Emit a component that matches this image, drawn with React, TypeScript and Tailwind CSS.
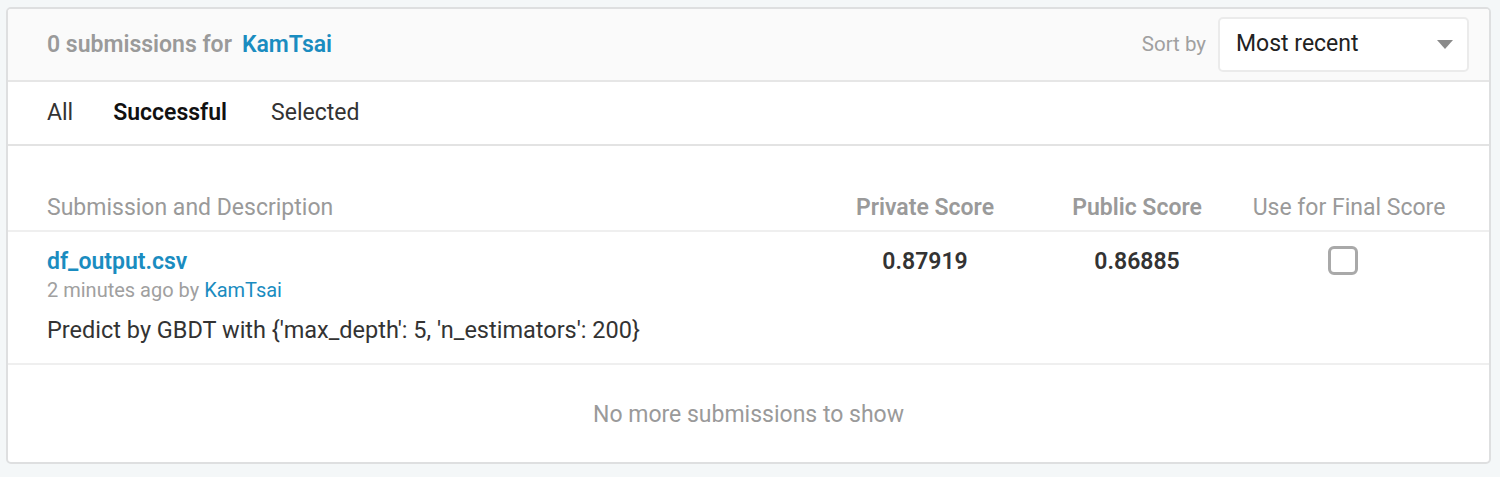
import React from "react";

export default function App() {
  const font = { fontFamily: "Roboto, 'Liberation Sans', sans-serif" };
  return (
    <div className="w-[1500px] h-[477px] bg-[#f4f7f8] pt-[7px] pl-[6px]" style={font}>
      <div className="w-[1485px] h-[457px] border-2 border-[#dedfe0] rounded-[5px] bg-white overflow-hidden flex flex-col">
        {/* Header */}
        <div className="h-[73px] bg-[#fafafa] border-b-2 border-[#e6e6e6] flex items-center justify-between pl-[39px] pr-[20px]">
          <div className="flex items-center text-[23px] font-semibold leading-[30px]">
            <span className="text-[#9a9a9a]">0 submissions for</span>
            <span className="text-[#1a8cc0] ml-[10px]">KamTsai</span>
          </div>
          <div className="flex items-center">
            <span className="text-[20.5px] text-[#a0a0a0] mr-[12px]">Sort by</span>
            <div className="w-[251px] h-[55px] bg-white border-2 border-[#ebebeb] rounded-[5px] flex items-center justify-between pl-[16px] pr-[14px]">
              <span className="text-[23px] text-[#222]">Most recent</span>
              <svg width="16" height="9" viewBox="0 0 16 9">
                <polygon points="0,0 16,0 8,9" fill="#8a8a8a" />
              </svg>
            </div>
          </div>
        </div>
        {/* Tabs */}
        <div className="h-[64px] border-b-2 border-[#e3e3e3] flex items-center pl-[39px] text-[23px] leading-[30px]">
          <span className="text-[#333]">All</span>
          <span className="text-[#111] font-semibold ml-[40px]">Successful</span>
          <span className="text-[#333] ml-[44px]">Selected</span>
        </div>
        {/* Table header */}
        <div className="mt-[47px] h-[39px] border-b-2 border-[#efefef] flex items-start pl-[39px] pr-[34px] text-[23px] leading-[30px] text-[#9a9a9a]">
          <div className="flex-1">Submission and Description</div>
          <div className="w-[212px] text-center font-semibold">Private Score</div>
          <div className="w-[212px] text-center font-semibold">Public Score</div>
          <div className="w-[212px] text-center">Use for Final Score</div>
        </div>
        {/* Row */}
        <div className="h-[133px] border-b-2 border-[#efefef] flex pl-[39px] pr-[34px] pt-[16px]">
          <div className="flex-1 flex flex-col">
            <span className="text-[23px] font-semibold text-[#1a8cc0] leading-[28px]">df_output.csv</span>
            <span className="text-[20px] text-[#a0a0a0] leading-[28px]">
              2 minutes ago by <span className="text-[#1a8cc0]">KamTsai</span>
            </span>
            <span className="text-[23.5px] text-[#333] mt-[13px] leading-[26px]">
              Predict by GBDT with {"{'max_depth': 5, 'n_estimators': 200}"}
            </span>
          </div>
          <div className="w-[212px] text-center text-[23px] font-semibold text-[#333] leading-[28px]">0.87919</div>
          <div className="w-[212px] text-center text-[23px] font-semibold text-[#333] leading-[28px]">0.86885</div>
          <div className="w-[212px] flex justify-center items-start pr-[12px]">
            <div className="-mt-[2px] w-[30px] h-[29px] border-[3px] border-[#a9a9a9] rounded-[6px] bg-white" />
          </div>
        </div>
        {/* Footer */}
        <div className="flex-1 flex items-center justify-center pt-[4px] text-[23px] text-[#9a9a9a]">
          No more submissions to show
        </div>
      </div>
    </div>
  );
}
